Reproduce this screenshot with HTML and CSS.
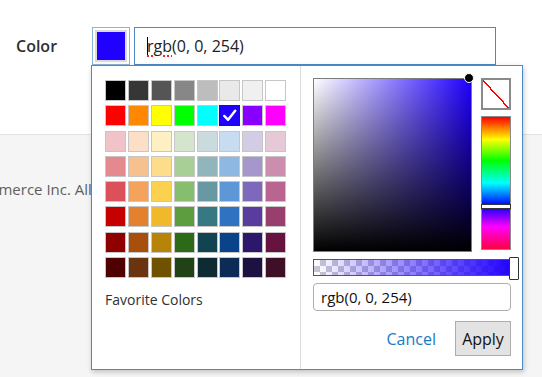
FILE: index.html
```html
<!doctype html>
<html lang="en">
  <head>
    <meta charset="UTF-8" />
    <meta name="viewport" content="width=device-width, initial-scale=1.0" />
    <title>Color - Product Attribute</title>
    <link rel="stylesheet" href="styles.css">
  </head>
  <body>
    <div class="page-main">
      <div class="field">
        <label class="field-label" for="color-value">Color</label>
        <div class="field-control">
          <button class="color-trigger" type="button" aria-label="Pick color">
            <span class="color-trigger-fill"></span>
          </button>
          <div class="color-input" id="color-value">
            <span class="color-input-text"><span class="caret"></span><span class="misspelled">rgb</span>(0, 0, 254)</span>
          </div>

          <div class="picker">
            <div class="palette">
              <div class="swatches">
                <span class="swatch" style="background:#000000"></span>
                <span class="swatch" style="background:#363636"></span>
                <span class="swatch" style="background:#555555"></span>
                <span class="swatch" style="background:#878787"></span>
                <span class="swatch" style="background:#bdbdbd"></span>
                <span class="swatch" style="background:#e9e9e9"></span>
                <span class="swatch" style="background:#f0f0f0"></span>
                <span class="swatch" style="background:#ffffff"></span>

                <span class="swatch" style="background:#ff0000"></span>
                <span class="swatch" style="background:#ff8800"></span>
                <span class="swatch" style="background:#ffff00"></span>
                <span class="swatch" style="background:#00ff00"></span>
                <span class="swatch" style="background:#00ffff"></span>
                <span class="swatch swatch-active" style="background:#2000fe">
                  <svg viewBox="0 0 20 20" width="19" height="19">
                    <path d="M4.5 10.5 L8.5 14.5 L16 5" fill="none" stroke="#fff" stroke-width="2.6" stroke-linecap="round" stroke-linejoin="round"/>
                  </svg>
                </span>
                <span class="swatch" style="background:#8800ff"></span>
                <span class="swatch" style="background:#ff00ff"></span>

                <span class="swatch" style="background:#f1c3c8"></span>
                <span class="swatch" style="background:#fcdfc6"></span>
                <span class="swatch" style="background:#fef0c3"></span>
                <span class="swatch" style="background:#d5e5cd"></span>
                <span class="swatch" style="background:#cbdadd"></span>
                <span class="swatch" style="background:#c7dcf0"></span>
                <span class="swatch" style="background:#d4cbe5"></span>
                <span class="swatch" style="background:#e6c9d6"></span>

                <span class="swatch" style="background:#e5898f"></span>
                <span class="swatch" style="background:#f7c18f"></span>
                <span class="swatch" style="background:#fedd8a"></span>
                <span class="swatch" style="background:#a8cf96"></span>
                <span class="swatch" style="background:#90b5bb"></span>
                <span class="swatch" style="background:#8eb8e2"></span>
                <span class="swatch" style="background:#a597cc"></span>
                <span class="swatch" style="background:#cc8eaf"></span>

                <span class="swatch" style="background:#db5059"></span>
                <span class="swatch" style="background:#f4a25c"></span>
                <span class="swatch" style="background:#fdd150"></span>
                <span class="swatch" style="background:#87bd6e"></span>
                <span class="swatch" style="background:#6898a2"></span>
                <span class="swatch" style="background:#5f97d6"></span>
                <span class="swatch" style="background:#7d68bb"></span>
                <span class="swatch" style="background:#b86690"></span>

                <span class="swatch" style="background:#c40000"></span>
                <span class="swatch" style="background:#e3812e"></span>
                <span class="swatch" style="background:#f0b92c"></span>
                <span class="swatch" style="background:#5e9c40"></span>
                <span class="swatch" style="background:#387882"></span>
                <span class="swatch" style="background:#2f72c2"></span>
                <span class="swatch" style="background:#5a3b9e"></span>
                <span class="swatch" style="background:#983f6d"></span>

                <span class="swatch" style="background:#8f0000"></span>
                <span class="swatch" style="background:#a94f0c"></span>
                <span class="swatch" style="background:#b68408"></span>
                <span class="swatch" style="background:#2c6a18"></span>
                <span class="swatch" style="background:#0f4450"></span>
                <span class="swatch" style="background:#0b438a"></span>
                <span class="swatch" style="background:#2c176c"></span>
                <span class="swatch" style="background:#66133f"></span>

                <span class="swatch" style="background:#4f0000"></span>
                <span class="swatch" style="background:#6a3410"></span>
                <span class="swatch" style="background:#6e5200"></span>
                <span class="swatch" style="background:#214216"></span>
                <span class="swatch" style="background:#0e2a33"></span>
                <span class="swatch" style="background:#0c2b55"></span>
                <span class="swatch" style="background:#1c1141"></span>
                <span class="swatch" style="background:#3f0f28"></span>
              </div>
              <div class="favorites-title">Favorite Colors</div>
            </div>

            <div class="picker-main">
              <div class="picker-top">
                <div class="saturation">
                  <span class="saturation-dot"></span>
                </div>
                <div class="picker-side">
                  <button class="clear-color" type="button" aria-label="No color"></button>
                  <div class="hue">
                    <span class="hue-handle"></span>
                  </div>
                </div>
              </div>
              <div class="alpha">
                <span class="alpha-handle"></span>
              </div>
              <div class="picker-input">rgb(0, 0, 254)</div>
              <div class="picker-actions">
                <a class="picker-cancel" href="#">Cancel</a>
                <button class="picker-apply" type="button">Apply</button>
              </div>
            </div>
          </div>
        </div>
      </div>
    </div>

    <footer class="page-footer">
      <p class="copyright">Copyright © 2019 Magento Commerce Inc. All rights reserved.</p>
    </footer>
  </body>
</html>
```

FILE: styles.css
```css
:root {
  --color-focus: #4a8acb;
  --color-link: #1979c3;
  --color-text: #303030;
  --color-blue: #2000fe;
  --color-border: #adadad;
  --font-sans: "Open Sans", "Liberation Sans", sans-serif;
}

* {
  box-sizing: border-box;
}

body {
  margin: 0;
  font-family: var(--font-sans);
  color: var(--color-text);
  background: #f5f5f5;
  min-height: 100vh;
  overflow: hidden;
}

/* header form row */
.page-main {
  background: #fff;
  height: 135px;
  border-bottom: 1px solid #e3e3e3;
  padding: 27px 0 0 16px;
}

.field {
  display: flex;
  align-items: center;
}

.field-label {
  width: 76px;
  font-size: 16px;
  font-weight: 600;
}

.field-control {
  position: relative;
  display: flex;
  gap: 4px;
}

.color-trigger {
  width: 38px;
  height: 38px;
  padding: 2px;
  margin: 0;
  border: 1px solid #8db4dc;
  background: #fff;
  cursor: pointer;
}

.color-trigger-fill {
  display: block;
  width: 100%;
  height: 100%;
  border: 2px solid #dadada;
  background: var(--color-blue);
}

.color-input {
  width: 362px;
  height: 38px;
  border: 1px solid var(--color-focus);
  padding: 0 12px;
  display: flex;
  align-items: center;
  font-size: 16px;
  color: #222;
}

.color-input-text {
  white-space: nowrap;
}

.caret {
  display: inline-block;
  vertical-align: -4px;
  width: 1px;
  height: 19px;
  background: #000;
  margin-right: -1px;
}

.misspelled {
  text-decoration: underline dotted #e02b27;
  text-decoration-thickness: 2px;
  text-underline-offset: 3px;
}

/* popup */
.picker {
  position: absolute;
  left: -1px;
  top: 38px;
  z-index: 10;
  width: 432px;
  height: 305px;
  display: flex;
  background: #fff;
  border: 1px solid var(--color-focus);
  box-shadow: 1px 2px 5px rgba(0, 0, 0, 0.22);
}

.palette {
  width: 209px;
  padding: 14px 13px;
  border-right: 1px solid #dcdcdc;
}

.swatches {
  display: grid;
  grid-template-columns: repeat(8, 21px);
  grid-auto-rows: 21px;
  column-gap: 1.9px;
  row-gap: 4.3px;
}

.swatch {
  display: flex;
  align-items: center;
  justify-content: center;
  border: 1px solid #c6c6c6;
}

.swatch-active {
  border-color: #1a129c;
}

.favorites-title {
  margin-top: 12px;
  font-size: 14px;
}

.picker-main {
  flex: 1;
  padding: 12px 11px 12px 12px;
  display: flex;
  flex-direction: column;
}

.picker-top {
  display: flex;
  align-items: flex-start;
  gap: 9px;
}

.saturation {
  position: relative;
  width: 159px;
  height: 174px;
  border: 1px solid #7d7d7d;
  background:
    linear-gradient(to top, #000, rgba(0, 0, 0, 0)),
    linear-gradient(to right, #fff, rgba(255, 255, 255, 0)),
    var(--color-blue);
}

.saturation-dot {
  position: absolute;
  left: 150px;
  top: -6px;
  width: 10px;
  height: 10px;
  border-radius: 50%;
  background: #000;
  border: 1px solid #fff;
}

.picker-side {
  width: 30px;
  display: flex;
  flex-direction: column;
  gap: 6px;
}

.clear-color {
  height: 32px;
  margin: 0;
  padding: 0;
  border: 2px solid #8a8a8a;
  background: linear-gradient(
    to top right,
    #fff calc(50% - 1px),
    #f00 calc(50% - 1px),
    #f00 calc(50% + 0.4px),
    #fff calc(50% + 0.4px)
  );
  cursor: pointer;
}

.hue {
  position: relative;
  height: 134px;
  border: 1px solid #8a8a8a;
  background: linear-gradient(
    to bottom,
    #ff0000 0%,
    #ffff00 17%,
    #00ff00 33%,
    #00ffff 50%,
    #0000ff 67%,
    #ff00ff 83%,
    #ff0040 100%
  );
}

.hue-handle {
  position: absolute;
  left: -1px;
  right: -1px;
  top: 87px;
  height: 5px;
  background: #fff;
  border: 1px solid #333;
}

.alpha {
  position: relative;
  margin-top: 7px;
  margin-right: -3px;
  height: 17px;
  border: 1px solid #555;
  background:
    linear-gradient(to right, rgba(32, 0, 254, 0), var(--color-blue)),
    repeating-conic-gradient(#c8c8d0 0 25%, #fff 0 50%) 0 0 / 12px 12px;
}

.alpha-handle {
  position: absolute;
  right: -6px;
  top: -3px;
  width: 10px;
  height: 23px;
  background: #fff;
  border: 1px solid #333;
  border-radius: 1px;
}

.picker-input {
  margin-top: 7px;
  height: 28px;
  border: 1px solid var(--color-border);
  border-radius: 4px;
  padding: 0 7px;
  display: flex;
  align-items: center;
  font-size: 15px;
  color: #111;
}

.picker-actions {
  margin-top: 10px;
  display: flex;
  justify-content: flex-end;
  align-items: center;
  gap: 19px;
}

.picker-cancel {
  color: var(--color-link);
  font-size: 16px;
  text-decoration: none;
}

.picker-apply {
  width: 56px;
  height: 35px;
  padding: 0;
  margin: 0;
  background: #e3e3e3;
  border: 1px solid var(--color-border);
  font-family: var(--font-sans);
  font-size: 16px;
  color: #111;
  cursor: pointer;
}

/* footer */
.page-footer {
  padding-top: 44px;
}

.copyright {
  margin: 0 0 0 -226px;
  white-space: nowrap;
  font-size: 15px;
  line-height: 20px;
  color: #5e5e5e;
}
```
